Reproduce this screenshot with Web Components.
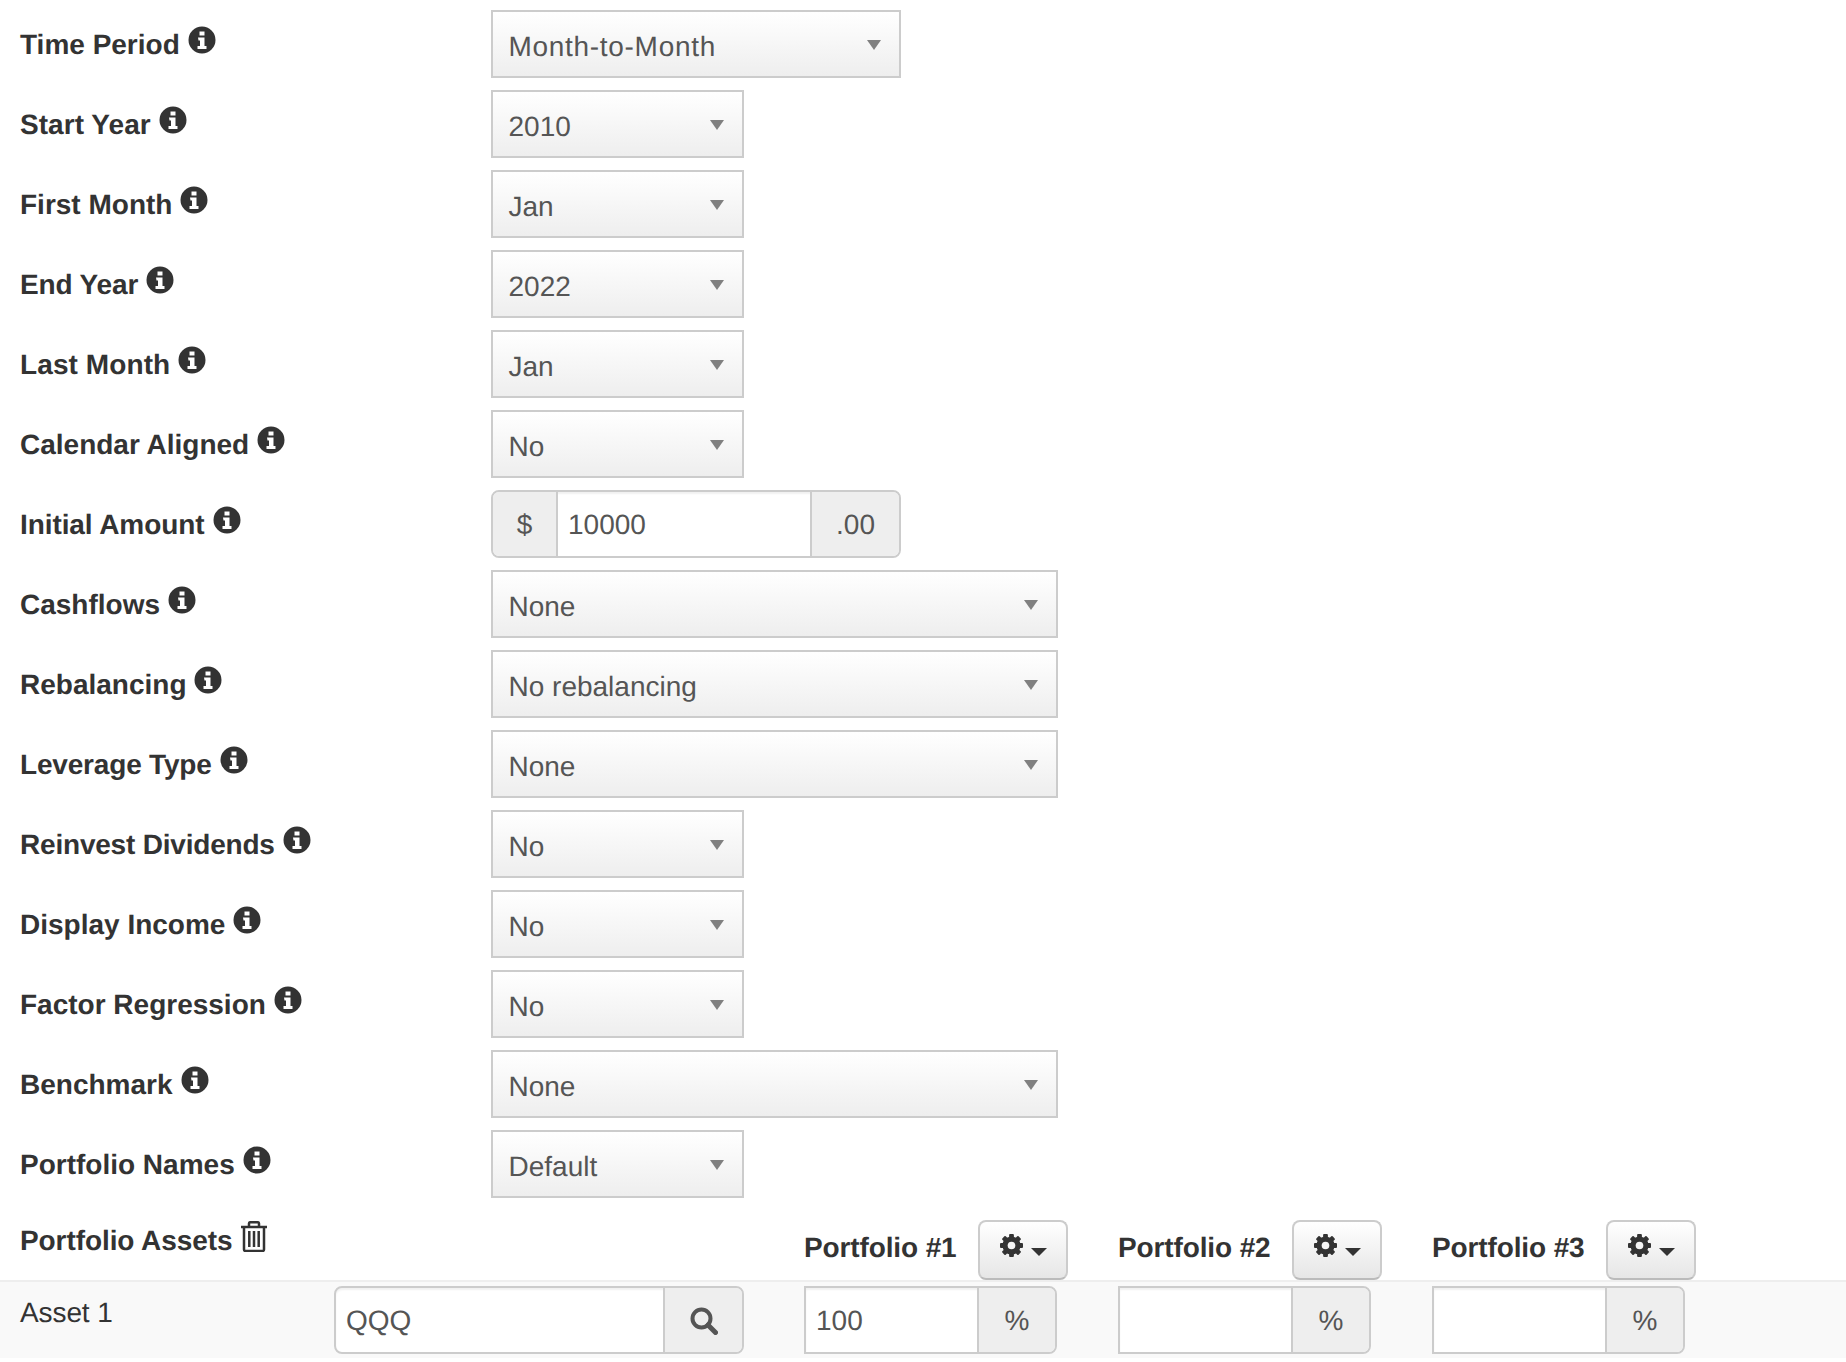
<!DOCTYPE html>
<html>
<head>
<meta charset="utf-8">
<title>Backtest Portfolio</title>
<style>
    html, body {
        margin: 0;
        background: #fff;
        font-family: "Liberation Sans", Arial, sans-serif;
        font-size: 28px;
        color: #333;
        text-rendering: geometricPrecision;
    }
</style>
</head>
<body>
<backtest-form>
    <form-row label="Time Period"><form-select size="medium" style="--ls:.7px">Month-to-Month</form-select></form-row>
    <form-row label="Start Year" style="--label-ls:.05px"><form-select>2010</form-select></form-row>
    <form-row label="First Month"><form-select>Jan</form-select></form-row>
    <form-row label="End Year" style="--label-ls:-.15px"><form-select>2022</form-select></form-row>
    <form-row label="Last Month" style="--label-ls:.1px"><form-select>Jan</form-select></form-row>
    <form-row label="Calendar Aligned"><form-select>No</form-select></form-row>
    <form-row label="Initial Amount" style="--label-ls:-.08px">
        <input-group style="width:410px">
            <input-addon slot="before" style="width:65px">$</input-addon>
            10000
            <input-addon slot="after" style="width:89px">.00</input-addon>
        </input-group>
    </form-row>
    <form-row label="Cashflows"><form-select size="wide">None</form-select></form-row>
    <form-row label="Rebalancing"><form-select size="wide">No rebalancing</form-select></form-row>
    <form-row label="Leverage Type" style="--label-ls:-.18px"><form-select size="wide">None</form-select></form-row>
    <form-row label="Reinvest Dividends" style="--label-ls:-.2px"><form-select>No</form-select></form-row>
    <form-row label="Display Income"><form-select>No</form-select></form-row>
    <form-row label="Factor Regression"><form-select>No</form-select></form-row>
    <form-row label="Benchmark"><form-select size="wide">None</form-select></form-row>
    <form-row label="Portfolio Names"><form-select>Default</form-select></form-row>
</backtest-form>
<assets-table>
    <portfolio-head>Portfolio #1</portfolio-head>
    <portfolio-head>Portfolio #2</portfolio-head>
    <portfolio-head>Portfolio #3</portfolio-head>
    <asset-row slot="rows" name="Asset 1" symbol="QQQ">
        <input-group square style="width:253px">100<input-addon slot="after" style="width:78px">%</input-addon></input-group>
        <input-group square style="width:253px"><input-addon slot="after" style="width:78px">%</input-addon></input-group>
        <input-group square style="width:253px"><input-addon slot="after" style="width:78px">%</input-addon></input-group>
    </asset-row>
</assets-table>
<script>
    ((customElements, document) => {
        'use strict';

        const infoIcon = `<svg width="28" height="28" viewBox="0 0 28 28"><path fill="#333" fill-rule="evenodd" d="M14 .5a13.500 13.500 0 1 0 0 27a13.500 13.500 0 1 0 0-27z M11.500 5.500h5v4h-5z M10 11.500h6.500v8.500h2v3h-9v-3h2.500v-5.500h-1.500z"/></svg>`;

        const trashIcon = `<svg width="26" height="31" viewBox="0 0 26 31" fill="none" stroke="#333" stroke-width="2.500"><path d="M0 6h26"/><path d="M8 5V2.500Q8 1.200 9.500 1.200h7Q18 1.200 18 2.500V5"/><path d="M3 6v22.500Q3 30 4.500 30h17Q23 30 23 28.500V6"/><path d="M8.300 10v16M13 10v16M17.700 10v16"/></svg>`;

        const gearIcon = `<svg width="23" height="23" viewBox="-12 -12 24 24"><g fill="#333"><rect x="-2.500" y="-12" width="5" height="24" rx="1"/><rect x="-2.500" y="-12" width="5" height="24" rx="1" transform="rotate(45)"/><rect x="-2.500" y="-12" width="5" height="24" rx="1" transform="rotate(90)"/><rect x="-2.500" y="-12" width="5" height="24" rx="1" transform="rotate(135)"/></g><circle r="6.700" fill="none" stroke="#333" stroke-width="5.500"/><circle r="4" fill="#f5f5f5"/></svg>`;

        const searchIcon = `<svg width="28" height="28" viewBox="0 0 28 28" fill="none" stroke="#555"><circle cx="11.500" cy="11.500" r="9" stroke-width="4"/><path d="M18 18l7.500 7.500" stroke-width="5" stroke-linecap="round"/></svg>`;

        const define = (name, html) => {
            customElements.define(name, class extends HTMLElement {
                constructor() {
                    super();
                    this.attachShadow({mode: 'open'}).innerHTML = html;
                }
            });
        };

        define('backtest-form', `
            <style>
                :host { display: flex; flex-direction: column; gap: 12px; padding: 10px 0 12px; }
            </style>
            <slot></slot>`);

        customElements.define('form-row', class extends HTMLElement {
            constructor() {
                super();
                const shadowRoot = this.attachShadow({mode: 'open'});
                shadowRoot.innerHTML = `
                    <style>
                        :host { display: grid; grid-template-columns: 491px 1fr; height: 68px; }
                        .label {
                            display: flex;
                            align-items: flex-start;
                            gap: 8px;
                            padding: 15px 0 0 20px;
                            line-height: 40px;
                            font-weight: bold;
                            color: #333;
                        }
                        #text { letter-spacing: var(--label-ls, 0); }
                        svg { display: block; margin-top: 1px; }
                    </style>
                    <div class="label"><span id="text"></span>${infoIcon}</div>
                    <div><slot></slot></div>`;
                shadowRoot.querySelector('#text').textContent = this.getAttribute('label');
            }
        });

        define('form-select', `
            <style>
                :host {
                    display: flex;
                    box-sizing: border-box;
                    width: 253px;
                    height: 68px;
                    align-items: center;
                    justify-content: space-between;
                    padding: 0 18px 0 15.500px;
                    border: 2px solid #ccc;
                    background: linear-gradient(#fff, #eee);
                    color: #555;
                }
                :host([size="medium"]) { width: 410px; }
                :host([size="wide"]) { width: 567px; }
                .text { margin-top: 5px; letter-spacing: var(--ls, 0); }
                .arrow {
                    width: 0;
                    height: 0;
                    margin-top: 1px;
                    border-left: 7px solid transparent;
                    border-right: 7px solid transparent;
                    border-top: 10px solid #808080;
                }
            </style>
            <span class="text"><slot></slot></span>
            <span class="arrow"></span>`);

        define('input-group', `
            <style>
                :host {
                    display: flex;
                    box-sizing: border-box;
                    height: 68px;
                    border: 2px solid #ccc;
                    border-radius: 8px;
                    overflow: hidden;
                    background: #fff;
                    color: #555;
                    box-shadow: inset 0 2px 2px rgba(0, 0, 0, .06);
                }
                :host([square]) { border-top-left-radius: 0; border-bottom-left-radius: 0; }
                .value { flex: 1; padding-left: 10px; line-height: 66px; }
                ::slotted([slot="before"]) { border-right: 2px solid #ccc; }
                ::slotted([slot="after"]) { border-left: 2px solid #ccc; }
            </style>
            <slot name="before"></slot>
            <div class="value"><slot></slot></div>
            <slot name="after"></slot>`);

        define('input-addon', `
            <style>
                :host {
                    display: flex;
                    box-sizing: border-box;
                    align-items: center;
                    justify-content: center;
                    padding-top: 2px;
                    background: #eee;
                    color: #555;
                }
            </style>
            <slot></slot>`);

        define('portfolio-head', `
            <style>
                :host { display: flex; height: 70px; box-sizing: border-box; padding-top: 10px; }
                .name {
                    width: 173.500px;
                    font-weight: bold;
                    line-height: 40px;
                    padding-top: 8px;
                    letter-spacing: -.12px;
                    color: #333;
                }
                .btn {
                    display: flex;
                    align-items: flex-start;
                    gap: 8px;
                    box-sizing: border-box;
                    width: 90px;
                    height: 60px;
                    padding: 12px 0 0 20px;
                    border: 2px solid #ccc;
                    border-bottom-color: #bbb;
                    border-radius: 8px;
                    background: linear-gradient(#fff, #e6e6e6);
                }
                .caret {
                    width: 0;
                    height: 0;
                    margin-top: 14px;
                    border-left: 8px solid transparent;
                    border-right: 8px solid transparent;
                    border-top: 8px solid #333;
                }
                svg { display: block; }
            </style>
            <span class="name"><slot></slot></span>
            <span class="btn">${gearIcon}<span class="caret"></span></span>`);

        define('assets-table', `
            <style>
                :host { display: block; }
                .head {
                    display: grid;
                    grid-template-columns: 784px 314px 314px 1fr;
                    padding-left: 20px;
                    height: 70px;
                }
                .title {
                    display: flex;
                    align-items: flex-start;
                    gap: 9px;
                    padding-top: 11px;
                    line-height: 40px;
                    font-weight: bold;
                    color: #333;
                }
                .title span { letter-spacing: -.08px; }
                .title svg { display: block; }
            </style>
            <div class="head">
                <div class="title"><span>Portfolio Assets</span>${trashIcon}</div>
                <slot></slot>
            </div>
            <slot name="rows"></slot>`);

        customElements.define('asset-row', class extends HTMLElement {
            constructor() {
                super();
                const shadowRoot = this.attachShadow({mode: 'open'});
                shadowRoot.innerHTML = `
                    <style>
                        :host {
                            display: grid;
                            grid-template-columns: 314px 470px 314px 314px 314px;
                            padding: 4px 0 0 20px;
                            height: 72px;
                            border-top: 2px solid #eee;
                            background: #f9f9f9;
                        }
                        .name { padding-top: 7px; line-height: 40px; letter-spacing: -.1px; color: #333; }
                    </style>
                    <div class="name" id="name"></div>
                    <div><input-group style="width:410px"><span id="symbol"></span><input-addon slot="after" style="width:79px">${searchIcon}</input-addon></input-group></div>
                    <slot></slot>`;
                shadowRoot.querySelector('#name').textContent = this.getAttribute('name');
                shadowRoot.querySelector('#symbol').textContent = this.getAttribute('symbol');
            }
        });
    })(window.customElements, document);
</script>
</body>
</html>
